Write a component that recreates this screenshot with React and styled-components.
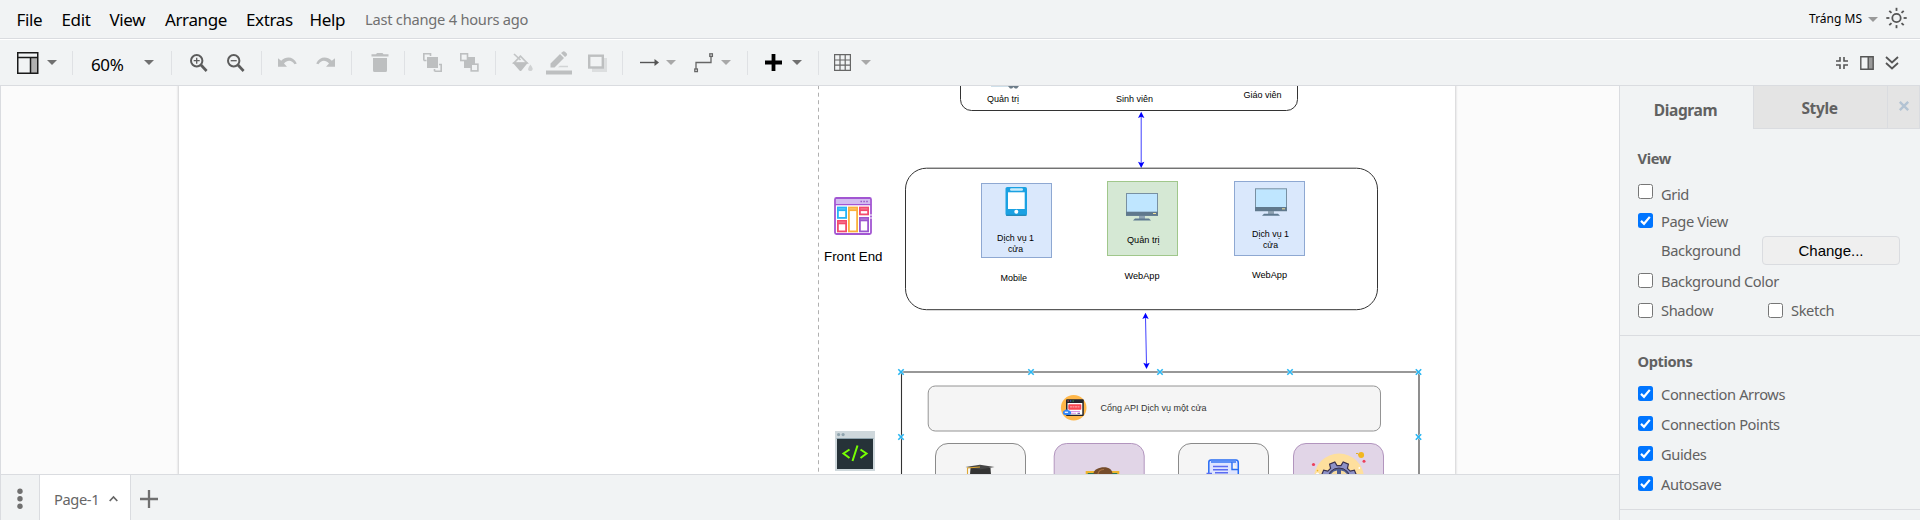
import React from "react";
import styled, { createGlobalStyle } from "styled-components";

const LINE = "#dadce0";
const CHROME = "#f1f3f4";
const UI_FONT = `"Noto Sans", "Open Sans", sans-serif`;
const ARIAL = `"Liberation Sans", Arial, sans-serif`;

const GlobalStyle = createGlobalStyle`
  * { box-sizing: border-box; }
  body { margin: 0; background: ${CHROME}; font-family: ${UI_FONT}; letter-spacing: -0.024em; overflow: hidden; }
`;

const Editor = styled.div`
  display: flex;
  flex-direction: column;
  width: 1920px;
  height: 520px;
  overflow: hidden;
  background: ${CHROME};
`;

const MenuBar = styled.header`
  display: flex;
  align-items: center;
  flex: none;
  height: 39px;
  padding: 0 13px 0 16.5px;
  border-bottom: 1px solid ${LINE};
  line-height: 39px;
`;

const MenuItem = styled.span`
  width: ${(p) => p.$w}px;
  font-size: 17px;
  color: #000;
  white-space: nowrap;
`;

const Status = styled.span`
  flex: 1;
  font-size: 14.67px;
  letter-spacing: -0.016em;
  color: #707070;
`;

const UserName = styled.span`
  margin-right: 6px;
  padding-bottom: 2px;
  font-size: 12px;
  letter-spacing: 0;
  color: #000;
`;

const Toolbar = styled.div`
  display: flex;
  align-items: center;
  flex: none;
  height: 47px;
  padding: 0 21px 0 17px;
  border-top: 1px solid #fff;
  border-bottom: 1px solid ${LINE};
`;

const Tool = styled.svg`
  flex: none;
  display: block;
  margin-left: ${(p) => p.$ml || 0}px;
  overflow: visible;
`;

const Separator = styled.i`
  flex: none;
  width: 1px;
  height: 24px;
  margin-left: ${(p) => p.$ml}px;
  background: #dfe1e4;
`;

const ZoomLevel = styled.span`
  width: 34px;
  margin: 4px 0 0 18px;
  font-size: 17px;
  line-height: 24px;
  color: #000;
`;

const Spacer = styled.div`
  flex: 1;
`;

const Body = styled.div`
  display: flex;
  flex: 1;
  min-height: 0;
`;

const Workspace = styled.main`
  display: flex;
  flex-direction: column;
  width: 1619px;
  border-left: 1px solid ${LINE};
`;

const Canvas = styled.div`
  flex: none;
  display: flex;
  justify-content: flex-start;
  height: 388px;
  padding-left: 178px;
  background: #fbfbfb;
  overflow: hidden;
`;

const Page = styled.div`
  width: 1276px;
  height: 388px;
  background: #fff;
  box-shadow: 0 0 2px 1px #d0d0d2;
`;

const Diagram = styled.svg`
  display: block;
`;

const NodeText = styled.text`
  font-family: ${ARIAL};
  font-size: ${(p) => p.$size || 8.4}px;
  fill: ${(p) => p.$fill || "#000"};
  letter-spacing: 0;
`;

const PageBar = styled.footer`
  display: flex;
  flex: 1;
  align-items: stretch;
  border-top: 1px solid ${LINE};
`;

const PageMenu = styled.div`
  display: flex;
  align-items: center;
  width: 38px;
  padding: 2px 0 0 16px;
`;

const PageTab = styled.div`
  display: flex;
  align-items: center;
  width: 92px;
  padding: 2px 0 0 14px;
  border: solid ${LINE};
  border-width: 0 1px;
  background: #fff;
  font-size: 14.67px;
  color: #666;
`;

const AddPage = styled.div`
  display: flex;
  align-items: center;
  padding: 2px 0 0 9px;
`;

const FormatPanel = styled.aside`
  flex: 1;
  border-left: 1px solid ${LINE};
  color: #616161;
`;

const Tabs = styled.div`
  display: flex;
  height: 43px;
`;

const Tab = styled.div`
  width: ${(p) => p.$w}px;
  display: flex;
  align-items: center;
  justify-content: center;
  padding-top: ${(p) => (p.$active ? 4 : 2)}px;
  padding-right: 2px;
  border: solid ${LINE};
  border-width: ${(p) => (p.$active ? "0" : "0 0 1px 1px")};
  background: ${(p) => (p.$active ? CHROME : "#e4e4e4")};
  font-size: 15.5px;
  font-weight: 700;
`;

const CloseTab = styled(Tab)`
  border-width: 0 1px 1px 1px;
  padding: 0 0 3px;
`;

const Section = styled.section`
  height: ${(p) => p.$h}px;
  padding: ${(p) => p.$top}px 19px 0 18px;
  border-bottom: 1px solid ${LINE};
  font-size: 14.67px;
`;

const Heading = styled.h3`
  height: 20px;
  margin: 0 0 ${(p) => p.$gap}px -0.5px;
  font-size: 14.67px;
  line-height: 20px;
`;

const Row = styled.div`
  display: flex;
  align-items: center;
  height: ${(p) => p.$h}px;
`;

const Option = styled.label`
  display: flex;
  align-items: center;
  width: ${(p) => p.$w || "auto"};
  white-space: nowrap;
`;

const Box = styled.span`
  display: flex;
  width: 15px;
  height: 15px;
  margin-right: 8px;
  margin-bottom: ${(p) => p.$lift || 0}px;
  border: ${(p) => (p.$on ? "0" : "1px solid #767676")};
  border-radius: 2.5px;
  background: ${(p) => (p.$on ? "#0075ff" : "#fff")};
`;

const FieldName = styled.span`
  width: 101px;
  margin-left: 23px;
`;

const Button = styled.button`
  width: 138px;
  height: 29px;
  padding: 0;
  border: 1px solid ${LINE};
  border-radius: 4px;
  background: #efefef;
  font: 15px ${ARIAL};
  color: #000;
`;

const Caret = ({ ml, color = "#707070" }) => (
  <Tool $ml={ml} width="10" height="5" viewBox="0 0 10 5">
    <path d="M0 0H10L5 5Z" fill={color} />
  </Tool>
);

const Check = ({ label, on, w, lift }) => (
  <Option $w={w}>
    <Box $on={on} $lift={lift}>
      {on && (
        <svg width="15" height="15" viewBox="0 0 15 15">
          <path d="M3 7.9 6 10.8 11.8 3.9" fill="none" stroke="#fff" strokeWidth="2.2" />
        </svg>
      )}
    </Box>
    {label}
  </Option>
);

const Magnifier = ({ ml, plus }) => (
  <Tool $ml={ml} width="18" height="18" viewBox="0 0 18 18" fill="none" stroke="#5c5c5c">
    <circle cx="6.7" cy="6.7" r="5.7" strokeWidth="2" />
    <path d="M11 11 16.6 17" strokeWidth="2.7" />
    <path d={plus ? "M3.7 6.7H9.7M6.7 3.7V9.7" : "M3.7 6.7H9.7"} strokeWidth="1.3" />
  </Tool>
);

const Undo = ({ ml, flip }) => (
  <Tool $ml={ml} width="19" height="11" viewBox="0 0 19 11">
    <path
      transform={flip ? "translate(19 0) scale(-1 1)" : undefined}
      d="M0 1.2 3.2 3.7C8-.9 15.300-.9 18.800 6.400L16.500 7.200C14 2.800 9.300 2.500 6 6.400L9 9.800H0Z"
      fill="#bdbfc0"
    />
  </Tool>
);

const FIT = "spacingAndGlyphs";
const T = ({ x, w, y, children, ...rest }) => (
  <NodeText x={x} y={y} textLength={w} lengthAdjust={FIT} {...rest}>
    {children}
  </NodeText>
);

const Monitor = ({ x, y }) => (
  <g transform={`translate(${x} ${y})`}>
    <path d="M13 22H19V26H13Z" fill="#8fa3b3" />
    <path d="M9 25.500H23L25 27.500H7Z" fill="#5f7a90" />
    <rect x=".5" y=".5" width="31" height="22" fill="#bfe6ff" stroke="#7890a2" />
    <rect x="0" y="18.700" width="32" height="4" fill="#60798d" />
    <rect x="27" y="20" width="3" height="1" fill="#f3e29b" />
  </g>
);

const Link = ({ x1, y1, x2, y2 }) => (
  <g>
    <path d={`M${x1} ${y1 + 4}L${x2} ${y2 - 4}`} stroke="#0000ff" strokeWidth=".75" />
    <path d={`M${x1} ${y1}l3.200 6.300l-3.200-1.300l-3.200 1.300Z`} fill="#0000ff" />
    <path d={`M${x2} ${y2}l-3.200-6.300l3.200 1.300l3.200-1.300Z`} fill="#0000ff" />
  </g>
);

const Card = ({ x, y, w, h, c }) => (
  <g>
    <rect x={x + 0.9} y={y + 0.9} width={w - 1.8} height={h - 1.8} fill="#fff" stroke={c} strokeWidth="1.800" />
    <rect x={x} y={y} width={w} height="4.300" fill={c} />
    <path d={`M${x + 1.5} ${y + 2.1}h${w - 3}`} stroke="#fff" strokeOpacity=".4" strokeWidth=".8" />
  </g>
);

const Frame = ({ x, y, w, h, fill, stroke, r }) => (
  <rect x={x} y={y} width={w} height={h} rx={r} fill={fill} stroke={stroke} />
);

const gear = (cx, cy, r1, r2, n) => {
  const pts = [];
  for (let i = 0; i < n; i++) {
    [[-0.32, r1], [-0.2, r2], [0.2, r2], [0.32, r1]].forEach(([o, r]) => {
      const a = ((i + 0.5 + o) / n) * Math.PI * 2 - Math.PI / 2;
      pts.push(`${(cx + r * Math.cos(a)).toFixed(2)},${(cy + r * Math.sin(a)).toFixed(2)}`);
    });
  }
  return pts.join(" ");
};

const CONNECTION_POINTS = [
  [901, 372], [1031, 372], [1160, 372], [1290, 372], [1418.5, 372], [901, 437], [1418.5, 437],
];

const Architecture = () => (
  <Diagram width="1276" height="388" viewBox="179 86 1276 388" fill="none">
    <path d="M818.500 85.200V474" stroke="#b0b0b0" strokeDasharray="4 3.500" />

    <rect x="960.500" y="40" width="337" height="70.500" rx="11" stroke="#333" />
    <path d="M991 86.500H1009" stroke="#cfe0ea" />
    <path d="M1008 86H1019L1017 88.500H1015L1013.500 87L1012 88.500H1010Z" fill="#6d7d89" />
    <T x={987} w={32} y={102}>Quản trị</T>
    <T x={1116} w={37} y={102}>Sinh viên</T>
    <T x={1243.5} w={38} y={98}>Giáo viên</T>

    <Link x1={1141.2} y1={111.8} x2={1141.2} y2={168} />
    <rect x="905.500" y="168.200" width="472" height="141.500" rx="21" stroke="#333" />

    <g>
      <rect x="835" y="198" width="36" height="36" rx="1.500" fill="#fff" stroke="#a255d2" strokeWidth="1.800" />
      <rect x="836" y="199" width="34" height="5.200" fill="#d2bcef" />
      <path d="M835 204.700H871" stroke="#a255d2" strokeWidth="1.300" />
      <path d="M860.500 201.500h1.400m1.500 0h1.400m1.500 0h1.400" stroke="#9450c4" strokeWidth="1.300" />
      <Card x={837} y={206.800} w={10} h={12} c="#27b4f5" />
      <Card x={848} y={206.800} w={10} h={25.500} c="#fbb03b" />
      <Card x={859} y={206.800} w={10} h={8.500} c="#f34b6c" />
      <Card x={837} y={220} w={10} h={12.300} c="#f34b6c" />
      <Card x={859} y={217} w={10} h={15.300} c="#9b56cf" />
      <path d="M869.500 215h3m-3 3h3" stroke="#fff" />
    </g>
    <T x={824} w={58.5} y={261} $size={13.2}>Front End</T>

    <Frame x={981.5} y={183.5} w={70} h={74} fill="#dae8fc" stroke="#8ea8d2" />
    <g>
      <rect x="1005.500" y="187" width="21.500" height="28.800" rx="1.800" fill="#1ba1e2" />
      <rect x="1008" y="192.300" width="16.700" height="16.700" fill="#fff" />
      <rect x="1010" y="188.300" width="13" height="2.400" rx="1.200" fill="#c9ecfb" />
      <circle cx="1016.300" cy="211.700" r="2" fill="#fff" />
      <path d="M1006 215.300H1026.500" stroke="#12719f" strokeWidth=".8" />
    </g>
    <T x={997} w={37} y={241}>Dịch vụ 1</T>
    <T x={1008} w={15} y={252}>cửa</T>
    <T x={1000.5} w={26.5} y={281}>Mobile</T>

    <Frame x={1107.5} y={181.5} w={70} h={74} fill="#d5e8d4" stroke="#a0c78b" />
    <Monitor x={1126} y={193} />
    <T x={1127} w={32.5} y={243}>Quản trị</T>
    <T x={1124.5} w={35} y={279}>WebApp</T>

    <Frame x={1234.5} y={181.5} w={70} h={74} fill="#dae8fc" stroke="#8ea8d2" />
    <Monitor x={1255} y={188.300} />
    <T x={1252} w={37} y={237}>Dịch vụ 1</T>
    <T x={1263} w={15} y={248}>cửa</T>
    <T x={1252} w={35} y={278}>WebApp</T>

    <Link x1={1145.500} y1={312.800} x2={1146.500} y2={369} />

    <path d="M901.500 474V372H1419V474" stroke="#333" strokeWidth="1.100" />
    <Frame x={928.2} y={386} w={452.3} h={45} r={7} fill="#f5f5f5" stroke="#949494" />
    <g>
      <circle cx="1073.700" cy="407.700" r="12.800" fill="#ffb749" />
      <rect x="1066" y="399.300" width="17.800" height="16.700" rx="1" fill="#22252c" />
      <rect x="1067.500" y="403" width="14.800" height="11.700" fill="#fff" />
      <rect x="1068.300" y="404.300" width="13" height="5.400" rx=".8" fill="#f8474f" />
      <path d="M1070 406.900H1080" stroke="#fff" strokeOpacity=".6" strokeDasharray="2 .5" />
      <path d="M1067.500 401h1.300" stroke="#ff5555" />
      <path d="M1070 401h1.300" stroke="#3d8cf5" />
      <path d="M1072.500 401h1.300" stroke="#3bc86b" />
      <path d="M1071 411.500H1080M1071 413.300H1076" stroke="#d98be2" strokeWidth=".9" />
      <path d="M1077.500 413.300H1080" stroke="#5f3594" />
      <path d="M1062.800 412.600a2.200 2.200 0 0 1 1.500-2a2.700 2.700 0 0 1 4.500 0a2.200 2.200 0 0 1 .3 4.400h-4.300a2.300 2.300 0 0 1-2-2.400Z" fill="#3285f6" />
      <path d="M1064.800 412.300h3.300" stroke="#fff" strokeWidth="1.200" />
    </g>
    <T x={1100.5} w={106} y={411} $fill="#333">Cổng API Dịch vụ một cửa</T>

    <g>
      <rect x="835" y="431" width="40" height="40" fill="#cfd8dc" />
      <rect x="837" y="439" width="36" height="30" fill="#263238" />
      <path d="M836.500 438.500H873.500" stroke="#90a4ae" />
      <circle cx="838.600" cy="434.600" r="1.600" fill="#90a4ae" />
      <circle cx="843.100" cy="434.600" r="1.600" fill="#90a4ae" />
      <path d="M849.500 449.500 843.500 453.500 849.500 458M860.500 449.500 866.500 453.500 860.500 458M857.500 445.500 852.500 461" stroke="#76ff03" strokeWidth="2" />
    </g>

    <Frame x={935.5} y={443.5} w={90} h={60} r={12.5} fill="#f5f5f5" stroke="#8a8a8a" />
    <path d="M970.500 468H990.500L991 475H970Z" fill="#333" />
    <path d="M965.500 467 980 464.800 994.500 467 980 469.500Z" fill="#454545" />
    <path d="M980 467 967.500 468V475" stroke="#dfa833" strokeWidth="1.100" />

    <Frame x={1054.2} y={443.5} w={90} h={60} r={12.5} fill="#e1d5e7" stroke="#b295be" />
    <rect x="1086.700" y="472" width="31.600" height="12" fill="#2d7658" stroke="#eeb52f" strokeWidth="2" />
    <path d="M1093.500 474C1093.500 469.500 1099 467.300 1104 467.300S1112.500 470 1112.500 474Z" fill="#754c2b" />
    <path d="M1098 474C1098.500 470.500 1101 469.500 1104 469.500" stroke="#a87042" strokeWidth="1.200" />

    <Frame x={1178.5} y={443.5} w={90} h={60} r={12.5} fill="#f5f5f5" stroke="#8a8a8a" />
    <path d="M1208.800 474V462.300Q1208.800 460 1211 460H1236Q1238.300 460 1238.300 463V474" fill="#dfe5ff" stroke="#276cf4" strokeWidth="1.500" />
    <path d="M1211 462H1236" stroke="#276cf4" strokeWidth="1.400" />
    <path d="M1232 462V469.500H1238" fill="#f5f5f5" stroke="#276cf4" strokeWidth="1.400" />
    <path d="M1213 466.500H1228M1213 469.700H1228M1215 472.700H1228M1206.500 473.500H1212" stroke="#5b6cf1" strokeWidth="1.400" />

    <Frame x={1293.5} y={443.5} w={90} h={60} r={12.5} fill="#e1d5e7" stroke="#b295be" />
    <circle cx="1339" cy="478.500" r="25" fill="#fedf9d" />
    <polygon points={gear(1339, 479.5, 14, 18, 8)} fill="#8d91c7" stroke="#39304c" strokeWidth="1.200" />
    <circle cx="1339" cy="479.500" r="11.500" fill="#4d5c91" stroke="#39304c" />
    <path d="M1331 474A9 9 0 0 1 1337 470.600V474ZM1341 470.600A9 9 0 0 1 1347 474H1341Z" fill="#f8dba0" />
    <circle cx="1361.200" cy="455" r="2.900" fill="#f2b71f" />
    <path d="M1356 453.500h2l1 2" stroke="#e2ad2d" />
    <circle cx="1313.500" cy="464.500" r="1.600" fill="#ec405b" />
    <circle cx="1364" cy="461.300" r="1.500" fill="#ec405b" />
    <circle cx="1317.500" cy="470.600" r=".8" fill="#f2b71f" />
    <circle cx="1317.500" cy="474" r="1.500" fill="#fff" />
    <circle cx="1359.300" cy="468" r=".9" fill="#fff" />

    {CONNECTION_POINTS.map(([x, y]) => (
      <g key={`${x}-${y}`}>
        <path d={`M${x - 2.7} ${y - 2.7}l5.400 5.400m0-5.400l-5.400 5.400`} stroke="#fff" strokeWidth="2.600" strokeOpacity=".6" />
        <path d={`M${x - 2.7} ${y - 2.7}l5.400 5.400m0-5.400l-5.400 5.400`} stroke="#29b6f2" strokeWidth="1.600" />
      </g>
    ))}
  </Diagram>
);

const RAYS = [0, 45, 90, 135, 180, 225, 270, 315];

export default function App() {
  return (
    <Editor>
      <GlobalStyle />
      <MenuBar>
        <MenuItem $w={45}>File</MenuItem>
        <MenuItem $w={48}>Edit</MenuItem>
        <MenuItem $w={55.500}>View</MenuItem>
        <MenuItem $w={81}>Arrange</MenuItem>
        <MenuItem $w={63.500}>Extras</MenuItem>
        <MenuItem $w={55.500}>Help</MenuItem>
        <Status>Last change 4 hours ago</Status>
        <UserName>Tráng MS</UserName>
        <Caret color="#999" />
        <Tool $ml={8} width="21" height="21" viewBox="0 0 21 21" fill="none" stroke="#555" strokeWidth="1.800">
          <circle cx="10.500" cy="9" r="4.200" />
          {RAYS.map((a) => (
            <path key={a} d="M10.500-1.200V1.900" transform={`rotate(${a} 10.500 9)`} />
          ))}
        </Tool>
      </MenuBar>

      <Toolbar>
        <Tool width="22" height="22" viewBox="0 0 22 22">
          <rect x="13.500" y="6" width="7" height="15" fill="#b0b0b0" />
          <path d="M.75.75H20.750V21.250H.75ZM1 5.500H21M13.500 5.500V21" fill="none" stroke="#1a1a1a" strokeWidth="1.500" />
        </Tool>
        <Caret ml={8} />
        <Separator $ml={15} />
        <ZoomLevel>60%</ZoomLevel>
        <Caret ml={19} />
        <Separator $ml={17} />
        <Magnifier ml={18} plus />
        <Magnifier ml={19} />
        <Separator $ml={16} />
        <Undo ml={16} />
        <Undo ml={19} flip />
        <Separator $ml={16} />
        <Tool $ml={19} width="18" height="19" viewBox="0 0 18 19" fill="#bdbfc0">
          <path d="M.5 1.200H5L6 0H11.500L12.500 1.200H17.500V3.500H.5ZM2 5H16V17.500Q16 19 14.500 19H3.500Q2 19 2 17.500Z" />
        </Tool>
        <Separator $ml={15} />
        <Tool $ml={18} width="19" height="19" viewBox="0 0 19 19" fill="none" stroke="#bdbfc0" strokeWidth="1.600">
          <path d="M.8 7.500V.8H7.500V3M3.500 7.500H.8M11.500 18.200H18.200V11.500H16M11.500 18.200V16" />
          <rect x="4" y="4" width="11" height="11" fill="#bdbfc0" stroke="none" />
        </Tool>
        <Tool $ml={18} width="19" height="19" viewBox="0 0 19 19" stroke="#bdbfc0" strokeWidth="1.600">
          <rect x="4" y="4" width="11" height="11" fill="#bdbfc0" stroke="none" />
          <rect x=".8" y=".8" width="6.700" height="6.700" fill={CHROME} />
          <rect x="11.200" y="11.200" width="6.700" height="6.700" fill={CHROME} />
        </Tool>
        <Separator $ml={16} />
        <Tool $ml={16} width="21" height="20" viewBox="0 0 21 20">
          <path d="M2 1 8.500 7M8.500 3.200 2 10H15Z" fill="none" stroke="#c2c4c5" strokeWidth="1.700" />
          <path d="M.5 9.500H16L9.500 17.500Q8.500 18.500 7.500 17.500Z" fill="#bdbfc0" />
          <path d="M18.300 11.500Q21 15 20.700 16.200A2.400 2.400 0 0 1 16 16.200Q16 15 18.300 11.500Z" fill="#d0d2d3" />
        </Tool>
        <Tool $ml={13} width="26" height="24" viewBox="0 0 26 24" fill="#bdbfc0">
          <path d="M0 19.500H26V23.500H0Z" />
          <path d="M4.500 16.500V12.500L14 3 18 7 8.500 16.500ZM15 2 17 .5Q18 0 19 .8L20.800 2.600Q21.500 3.500 20.800 4.500L19 6Z" />
          <path d="M12 16.300 14 14.800H22V16.300Z" opacity=".6" />
        </Tool>
        <Tool $ml={16} width="19" height="18" viewBox="0 0 19 18">
          <path d="M4 4H19V18H4Z" fill="#dcdedf" />
          <rect x="1.200" y="1.700" width="13.600" height="11.800" fill={CHROME} stroke="#bdbfc0" strokeWidth="2.400" />
        </Tool>
        <Separator $ml={15} />
        <Tool $ml={17} width="19" height="8" viewBox="0 0 19 8">
          <path d="M0 3.500H16" stroke="#555" strokeWidth="1.400" />
          <path d="M14.500 0 19 3.500 14.500 7Z" fill="#555" />
        </Tool>
        <Caret ml={7} color="#a8a8a8" />
        <Tool $ml={18} width="20" height="20" viewBox="0 0 20 20" fill="none" stroke="#666" strokeWidth="1.300">
          <path d="M2 16V9.500H17V4" />
          <rect x=".8" y="16" width="2.600" height="2.600" />
          <rect x="15.800" y=".8" width="2.600" height="2.600" />
        </Tool>
        <Caret ml={7} color="#a8a8a8" />
        <Separator $ml={16} />
        <Tool $ml={17} width="17" height="17" viewBox="0 0 17 17">
          <path d="M0 8.500H17M8.500 0V17" stroke="#000" strokeWidth="3.800" />
        </Tool>
        <Caret ml={10} />
        <Separator $ml={16} />
        <Tool $ml={15} width="17" height="17" viewBox="0 0 17 17" fill="none" stroke="#666" strokeWidth="1.200">
          <path d="M.6.6H16.400V16.400H.6ZM6 .6V16.400M11.200.6V16.400M.6 6H16.400M.6 11.200H16.400" />
        </Tool>
        <Caret ml={10} color="#a8a8a8" />
        <Spacer />
        <Tool width="12" height="12" viewBox="0 0 12 12" fill="none" stroke="#555" strokeWidth="1.600">
          <path d="M4 0V4H0M8 0V4H12M4 12V8H0M8 12V8H12" />
        </Tool>
        <Tool $ml={12} width="14" height="14" viewBox="0 0 14 14">
          <rect x="8" y="1" width="5" height="12" fill="#999" />
          <path d="M.8.8H13.200V13.200H.8ZM8.200 1V13" fill="none" stroke="#555" strokeWidth="1.400" />
        </Tool>
        <Tool $ml={11} width="14" height="14" viewBox="0 0 14 14" fill="none" stroke="#555" strokeWidth="1.800">
          <path d="M1 1 7 6.500 13 1M1 7 7 12.500 13 7" />
        </Tool>
      </Toolbar>

      <Body>
        <Workspace>
          <Canvas>
            <Page>
              <Architecture />
            </Page>
          </Canvas>
          <PageBar>
            <PageMenu>
              <svg width="7" height="22" viewBox="0 0 7 22" fill="#707070">
                <circle cx="3" cy="3.300" r="2.700" />
                <circle cx="3" cy="10.800" r="2.700" />
                <circle cx="3" cy="18.300" r="2.700" />
              </svg>
            </PageMenu>
            <PageTab>
              Page-1
              <Tool $ml={10} width="9" height="6" viewBox="0 0 9 6" fill="none" stroke="#666" strokeWidth="1.700">
                <path d="M.7 5 4.500 1 8.300 5" />
              </Tool>
            </PageTab>
            <AddPage>
              <svg width="18" height="18" viewBox="0 0 18 18">
                <path d="M0 9H18M9 0V18" stroke="#707070" strokeWidth="2.300" />
              </svg>
            </AddPage>
          </PageBar>
        </Workspace>

        <FormatPanel>
          <Tabs>
            <Tab $w={133} $active>Diagram</Tab>
            <Tab $w={134}>Style</Tab>
            <CloseTab $w={33}>
              <Tool width="10" height="10" viewBox="0 0 10 10">
                <path d="M.8.8 9.200 9.200M9.200.8.8 9.200" stroke="#b3c3d3" strokeWidth="2.400" />
              </Tool>
            </CloseTab>
          </Tabs>
          <Section $h={207} $top={19}>
            <Heading $gap={12}>View</Heading>
            <Row $h={27}><Check label="Grid" lift={4} /></Row>
            <Row $h={27}><Check label="Page View" on /></Row>
            <Row $h={32}>
              <FieldName>Background</FieldName>
              <Button>Change...</Button>
            </Row>
            <Row $h={30}><Check label="Background Color" lift={1} /></Row>
            <Row $h={28}>
              <Check label="Shadow" w="130px" />
              <Check label="Sketch" />
            </Row>
          </Section>
          <Section $h={174} $top={15}>
            <Heading $gap={8}>Options</Heading>
            <Row $h={30}><Check label="Connection Arrows" on lift={1} /></Row>
            <Row $h={30}><Check label="Connection Points" on lift={1} /></Row>
            <Row $h={30}><Check label="Guides" on lift={1} /></Row>
            <Row $h={30}><Check label="Autosave" on lift={1} /></Row>
          </Section>
        </FormatPanel>
      </Body>
    </Editor>
  );
}
